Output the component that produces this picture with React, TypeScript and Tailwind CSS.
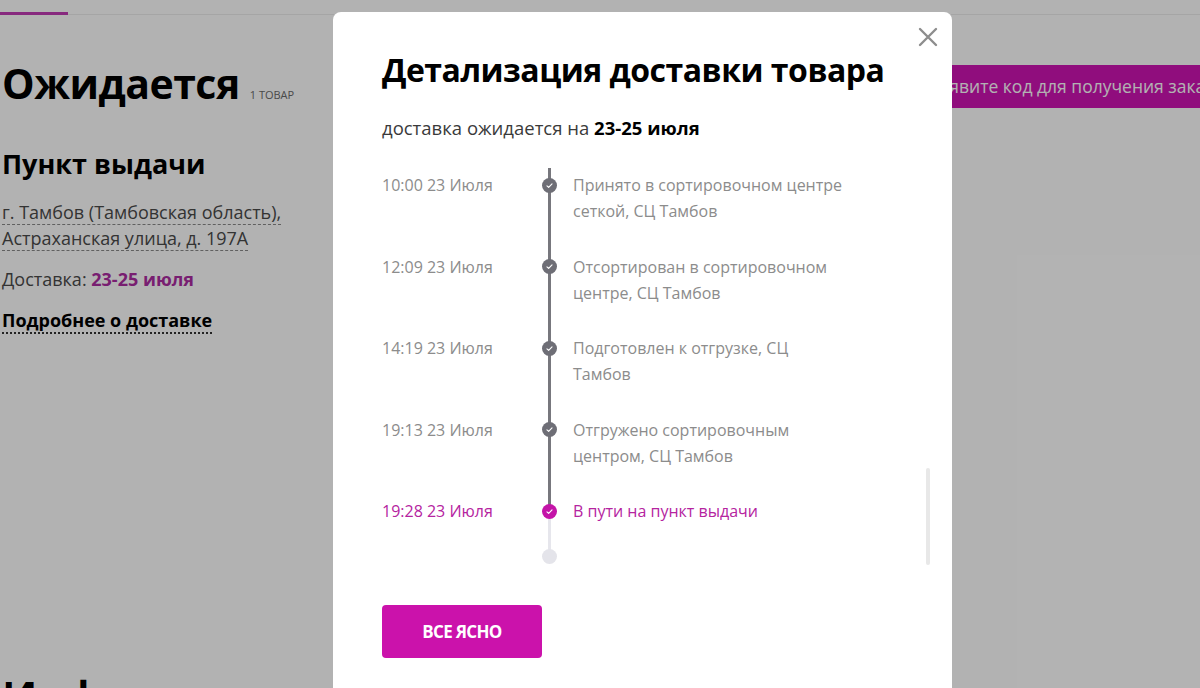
import React from 'react';

const font = { fontFamily: '"Open Sans", "Noto Sans", Arial, sans-serif' };

interface Step {
  time: string;
  lines: string[];
  current?: boolean;
}

const steps: Step[] = [
  { time: '10:00 23 Июля', lines: ['Принято в сортировочном центре', 'сеткой, СЦ Тамбов'] },
  { time: '12:09 23 Июля', lines: ['Отсортирован в сортировочном', 'центре, СЦ Тамбов'] },
  { time: '14:19 23 Июля', lines: ['Подготовлен к отгрузке, СЦ', 'Тамбов'] },
  { time: '19:13 23 Июля', lines: ['Отгружено сортировочным', 'центром, СЦ Тамбов'] },
  { time: '19:28 23 Июля', lines: ['В пути на пункт выдачи'], current: true },
];

const Check = () => (
  <svg viewBox="0 0 16 16" className="w-[9px] h-[9px]">
    <path d="M3.5 8.5l3 3 6-6.5" fill="none" stroke="white" strokeWidth="2" strokeLinecap="round" strokeLinejoin="round" />
  </svg>
);

const Page = () => (
  <div className="h-[688px] overflow-hidden bg-white" style={font}>
    <div className="h-[15px] border-b border-[#ececec] relative">
      <div className="absolute left-0 bottom-[-1px] w-[68px] h-[3px] bg-[#c23bb5]" />
    </div>
    <div className="flex">
      <div className="w-[330px] pl-[2px] shrink-0">
        <div className="flex items-baseline gap-[10px] mt-[42px] whitespace-nowrap">
          <h1 className="text-[41px] font-bold text-black leading-[52px] tracking-[-0.5px]">Ожидается</h1>
          <span className="text-[11px] text-[#6a6a6a] uppercase">1 товар</span>
        </div>
        <h2 className="text-[27px] font-bold text-black mt-[38px] leading-[34px]">Пункт выдачи</h2>
        <div className="mt-[18px] text-[18px] leading-[26px] text-[#4a4a4a]">
          <span className="border-b border-dashed border-[#8a8a8a]">г. Тамбов (Тамбовская область),</span>
          <br />
          <span className="border-b border-dashed border-[#8a8a8a]">Астраханская улица, д. 197А</span>
        </div>
        <div className="mt-[15px] text-[18px] leading-[26px] text-[#4a4a4a]">
          Доставка: <span className="font-bold text-[#ad2ca2]">23-25 июля</span>
        </div>
        <div className="mt-[15px] text-[18px] leading-[26px] font-bold text-black whitespace-nowrap">
          <span className="border-b-2 border-dotted border-[#333]">Подробнее о доставке</span>
        </div>
        <h2 className="text-[43px] font-bold text-black mt-[338px] leading-[52px] whitespace-nowrap">Информация о заказе</h2>
      </div>
      <div className="flex-1 pt-[50px] pl-[550px]">
        <div className="h-[43px] w-[420px] bg-[#cf14b4] flex items-center pl-[14px] text-[17.5px] text-white whitespace-nowrap">
          Предъявите код для получения заказа
        </div>
      </div>
    </div>
  </div>
);

const Modal = () => (
  <div className="absolute left-[333px] top-[12px] w-[619px] h-[700px] bg-white rounded-[8px] pl-[49px] pr-[22px] pt-[38px]" style={font}>
    <button className="absolute right-[13px] top-[14px] w-[22px] h-[22px] flex items-center justify-center">
      <svg viewBox="0 0 20 20" className="w-[20px] h-[20px]">
        <path d="M2 2l16 16M18 2L2 18" stroke="#8d8d8d" strokeWidth="2.4" strokeLinecap="round" />
      </svg>
    </button>
    <h2 className="text-[32px] font-bold text-black leading-[40px] tracking-[-0.5px] whitespace-nowrap">Детализация доставки товара</h2>
    <p className="mt-[25px] text-[18.5px] leading-[26px] text-[#3a3a3a]">
      доставка ожидается на <span className="font-bold text-black">23-25 июля</span>
    </p>
    <div className="relative mt-[27px] h-[397px] pt-[4px]">
      <div className="absolute left-[166px] top-0 w-[3px] h-[343px] bg-[#77777d]" />
      <div className="absolute left-[166px] top-[343px] w-[3px] h-[46px] bg-[#e6e6ec]" />
      <div className="absolute left-[160px] top-[381px] w-[15px] h-[15px] rounded-full bg-[#e4e4ea]" />
      <div className="absolute right-[0px] top-[300px] w-[4px] h-[97px] rounded-full bg-[#e8e8e8]" />
      {steps.map((s) => (
        <div key={s.time} className="flex h-[81.5px] text-[16px] leading-[26px]">
          <div className={`w-[160px] ${s.current ? 'text-[#b5249f]' : 'text-[#8c8c8c]'}`}>{s.time}</div>
          <div className="w-[15px] relative">
            <div
              className={`absolute left-0 top-[5.5px] w-[15px] h-[15px] rounded-full flex items-center justify-center ${
                s.current ? 'bg-[#c414a8]' : 'bg-[#6e6e76]'
              }`}
            >
              <Check />
            </div>
          </div>
          <div className={`ml-[16px] whitespace-nowrap ${s.current ? 'text-[#b5249f]' : 'text-[#8c8c8c]'}`}>
            {s.lines.map((l) => (
              <div key={l}>{l}</div>
            ))}
          </div>
        </div>
      ))}
    </div>
    <button className="mt-[40px] w-[160px] h-[53px] rounded-[4px] bg-[#cb12ab] text-white text-[17px] font-bold tracking-[-0.7px]">
      ВСЕ ЯСНО
    </button>
  </div>
);

export default function App() {
  return (
    <div className="relative h-[688px] w-[1200px] overflow-hidden">
      <Page />
      <div className="absolute inset-0 bg-black/30" />
      <Modal />
    </div>
  );
}
